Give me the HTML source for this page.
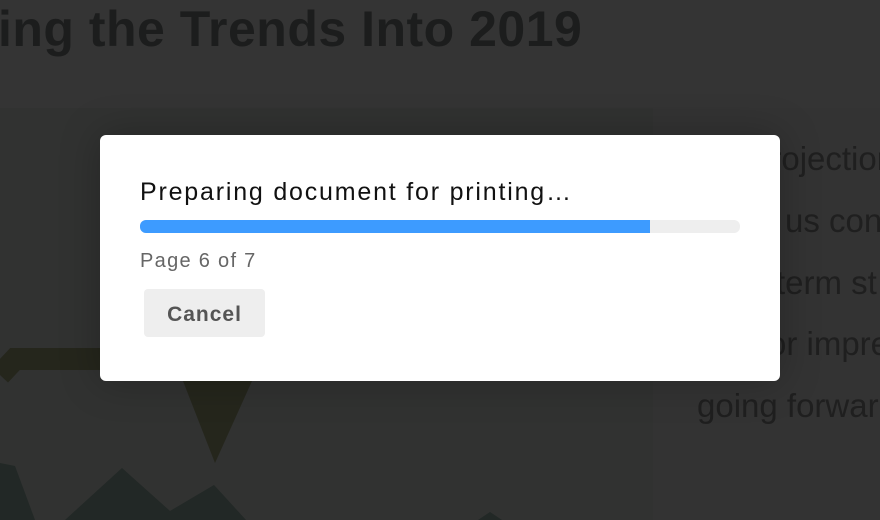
<!DOCTYPE html>
<html><head><style>
html,body{margin:0;padding:0}
body{width:880px;height:520px;overflow:hidden;background:#313231;position:relative;font-family:"Liberation Sans",sans-serif}
.top{position:absolute;left:0;top:0;width:880px;height:108px;background:#343434}
.title{position:absolute;left:-2px;top:0;font-size:50px;font-weight:bold;color:#1c1d1d;white-space:nowrap;letter-spacing:0.5px}
.panel{position:absolute;left:653px;top:108px;width:227px;height:412px;background:#333333}
.pt{position:absolute;font-size:33px;color:#1f1f1f;white-space:nowrap}
.dlg{position:absolute;left:100px;top:135px;width:680px;height:246px;background:#fff;border-radius:6px;box-shadow:0 0 40px rgba(0,0,0,.25)}
.h{position:absolute;left:40px;top:43px;font-size:25px;color:#111;letter-spacing:1.8px}
.bar{position:absolute;left:40px;top:85px;width:600px;height:13px;background:#eee;border-radius:6px;overflow:hidden}
.fill{width:510px;height:13px;background:#3d9bff}
.pg{position:absolute;left:40px;top:115px;font-size:20px;color:#666;letter-spacing:1.3px}
.btn{position:absolute;left:44px;top:154px;width:121px;height:48px;background:#eee;border-radius:4px;font-size:21px;font-weight:bold;color:#555;text-align:center;line-height:51px;letter-spacing:1px}
</style></head><body>
<div class="top"></div>
<div class="title">ing the Trends Into 2019</div>
<div class="panel"></div>
<svg style="position:absolute;left:0;top:0" width="660" height="520">
<polyline points="0,375 15,359 240,359" fill="none" stroke="#25261c" stroke-width="22"/>
<polygon points="183,381 252,381 215,463" fill="#25261c"/>
<polygon points="0,463 15,466 35,520 0,520" fill="#222826"/>
<polygon points="65,520 122,468 170,511 214,485 246,520" fill="#222826"/>
<polygon points="478,520 490,512 502,520" fill="#222826"/>
</svg>
<div class="pt" style="left:752px;top:140px">projections</div>
<div class="pt" style="left:785px;top:202px">us con</div>
<div class="pt" style="left:776px;top:264px">term st</div>
<div class="pt" style="left:768px;top:325px">or impre</div>
<div class="pt" style="left:697px;top:387px">going forwar</div>
<div class="dlg">
<div class="h">Preparing document for printing…</div>
<div class="bar"><div class="fill"></div></div>
<div class="pg">Page 6 of 7</div>
<div class="btn">Cancel</div>
</div>
</body></html>
